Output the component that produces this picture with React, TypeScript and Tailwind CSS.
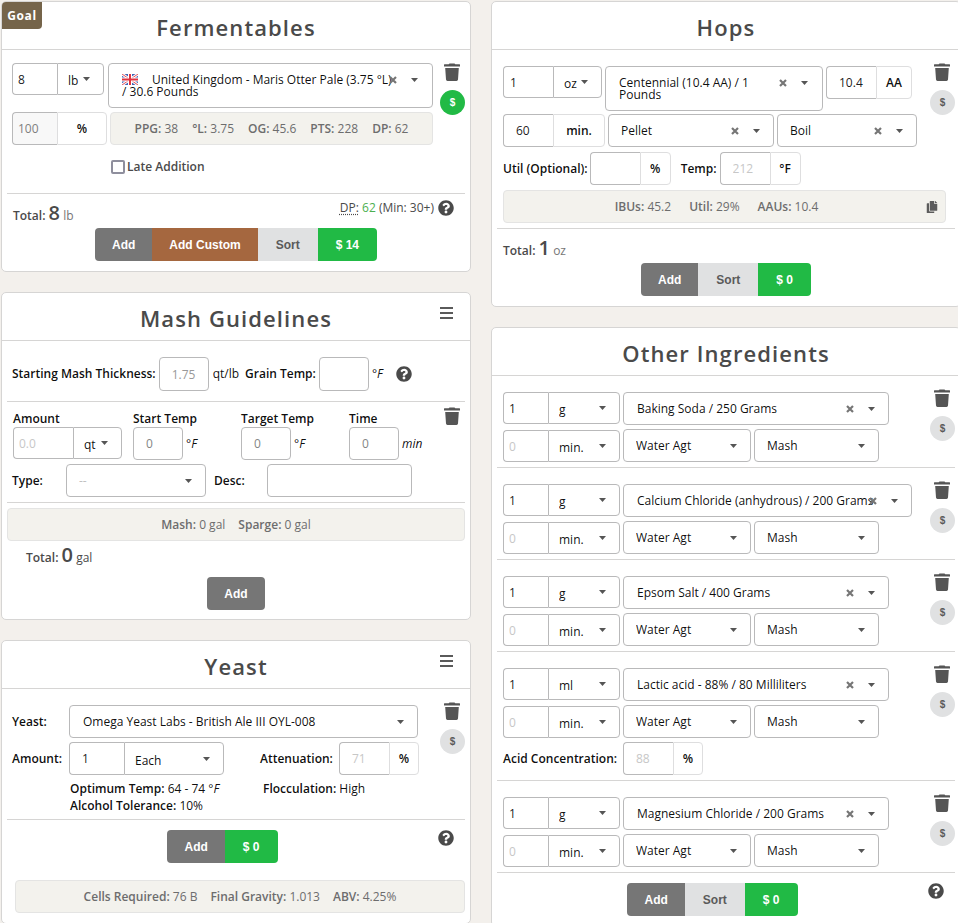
import type { ReactNode } from 'react';
import { clsx } from 'clsx';
import { FaCopy, FaQuestionCircle } from 'react-icons/fa';

type FieldProps = {
  label: string;
  value?: string;
  placeholder?: string;
  disabled?: boolean;
  id?: string;
  className?: string;
};

function Field({ label, value, placeholder, disabled, id, className }: FieldProps) {
  return (
    <input
      id={id}
      type="text"
      aria-label={label}
      defaultValue={value}
      placeholder={placeholder}
      disabled={disabled}
      className={clsx(
        'h-full min-w-0 shrink-0 border border-[#b9b9ba] bg-white text-black/90 disabled:bg-[#f8f8f8] disabled:text-[#7f7f7f]',
        className,
      )}
    />
  );
}

function Caret() {
  return (
    <svg viewBox="0 0 7 4" className="pointer-events-none absolute right-[14px] top-1/2 h-1 w-[7px] -translate-y-1/2 fill-[#555]">
      <path d="M0 0h7L3.5 4z" />
    </svg>
  );
}

function ClearButton() {
  return (
    <button type="button" aria-label="Clear" className="absolute right-[35px] top-1/2 -translate-y-1/2 text-[#767676]">
      <svg viewBox="0 0 8 8" className="size-2" fill="none" stroke="currentColor" strokeWidth="2.2">
        <path d="M1 1l6 6M7 1L1 7" />
      </svg>
    </button>
  );
}

function TrashIcon() {
  return (
    <svg viewBox="0 0 16 18" className="h-[18px] w-4" fill="currentColor">
      <path d="M5.5 0.4h5l.8.9h4.2a.5.5 0 0 1 .5.5v1.8H0V1.800a.5.5 0 0 1 .5-.5h4.200z" />
      <path d="M1.200 5h13.600l-.8 11.600A1.500 1.500 0 0 1 12.500 18h-9A1.500 1.500 0 0 1 2 16.600z" />
    </svg>
  );
}

type DropdownProps = {
  label: string;
  value: string;
  clearable?: boolean;
  className?: string;
  selectClassName?: string;
};

function Dropdown({ label, value, clearable, className, selectClassName = 'rounded pl-3' }: DropdownProps) {
  return (
    <div className={clsx('relative h-full shrink-0', className)}>
      <select
        aria-label={label}
        className={clsx('h-full w-full appearance-none border border-[#b9b9ba] bg-white', selectClassName)}
      >
        <option>{value}</option>
      </select>
      {clearable && <ClearButton />}
      <Caret />
    </div>
  );
}

// Dropdown whose value may take two lines. The select lies invisibly on top of the drawn value.
function WrappingDropdown({ label, value, children, className }: { label: string; value: string; children: ReactNode; className?: string }) {
  return (
    <div className={clsx('relative h-[45px] rounded border border-[#b9b9ba] bg-white pr-9 pt-[10px] leading-3', className)}>
      <div aria-hidden="true">{children}</div>
      <select aria-label={label} className="absolute inset-0 w-full appearance-none opacity-0">
        <option>{value}</option>
      </select>
      <div className="absolute inset-x-0 top-0 h-8">
        <ClearButton />
        <Caret />
      </div>
    </div>
  );
}

// Number + unit select, joined in one box
function AmountUnit({ field, unit, className, unitClassName }: { field: FieldProps; unit: string; className?: string; unitClassName: string }) {
  return (
    <div className={clsx('flex shrink-0', className ?? 'h-8')}>
      <Field {...field} className={clsx('rounded-l border-r-0 placeholder:text-[#c7c7c7]', field.className)} />
      <Dropdown label={`${field.label} unit`} value={unit} className={unitClassName} selectClassName="rounded-r pl-[10px] pt-1" />
    </div>
  );
}

function Addon({ field, unit, className, unitClassName }: { field: FieldProps; unit: string; className?: string; unitClassName: string }) {
  return (
    <div className={clsx('flex h-[33px] shrink-0', className)}>
      <Field {...field} className={clsx('rounded-l border-r-0 placeholder:text-[#c7c7c7]', field.className)} />
      <span className={clsx('flex items-center justify-center rounded-r border border-[#dededf] font-semibold', unitClassName)}>
        {unit}
      </span>
    </div>
  );
}

function Panel({ title, menu, badge, children }: { title: string; menu?: boolean; badge?: string; children: ReactNode }) {
  return (
    <section className="relative rounded-[5px] border border-[#d6d5d4] bg-white">
      <header className="flex h-12 items-center justify-center border-b border-[#d6d5d4] pt-1">
        <h2 className="text-[22px] font-semibold tracking-wider text-[#4a4a4a]">{title}</h2>
      </header>
      {badge && (
        <span className="absolute left-0 top-0 flex h-[27px] w-10 items-center justify-center rounded-br rounded-tl bg-[#75644a] font-bold tracking-wider text-white">
          {badge}
        </span>
      )}
      {menu && (
        <button type="button" aria-label={`${title} menu`} className="absolute right-[17px] top-[14px] flex w-[13px] flex-col gap-[3px]">
          <span className="h-[2px] w-full bg-[#5a5a5a]" />
          <span className="h-[2px] w-full bg-[#5a5a5a]" />
          <span className="h-[2px] w-full bg-[#5a5a5a]" />
        </button>
      )}
      <div className="mx-[5px]">{children}</div>
    </section>
  );
}

function RowActions({ priced }: { priced?: boolean }) {
  return (
    <div className="ml-auto flex w-[25px] shrink-0 flex-col items-center gap-[9px] pt-[13px]">
      <button type="button" aria-label="Delete" className="mr-[2px] text-[#555]">
        <TrashIcon />
      </button>
      <button
        type="button"
        aria-label="Price"
        className={clsx(
          'size-[25px] rounded-full font-["Liberation_Sans",sans-serif] text-[10px] font-bold',
          priced ? 'bg-[#21ba45] text-white' : 'bg-[#e0e1e2] text-[#5a5a5a]',
        )}
      >
        $
      </button>
    </div>
  );
}

const BUTTON_TONES = {
  gray: 'bg-[#767676] text-white',
  brown: 'bg-[#a5673f] text-white',
  light: 'bg-[#e0e1e2] text-[#5a5a5a]',
  green: 'bg-[#21ba45] text-white',
};

function ButtonGroup({ buttons }: { buttons: { text: string; tone: keyof typeof BUTTON_TONES }[] }) {
  return (
    <div className="flex flex-1 justify-center">
      {buttons.map((b) => (
        <button
          key={b.text}
          type="button"
          className={clsx(
            'h-[33px] font-["Liberation_Sans",sans-serif] font-bold first:rounded-l last:rounded-r',
            b.text.startsWith('Add') ? 'px-[17px]' : 'px-[18px]',
            BUTTON_TONES[b.tone],
          )}
        >
          {b.text}
        </button>
      ))}
    </div>
  );
}

function Stats({ items, className }: { items: [string, string][]; className?: string }) {
  return (
    <div className={clsx('flex h-[33px] items-center justify-center rounded border border-[#e4e4e3] bg-[#f3f2ed] text-[#6d6d6d]', className)}>
      {items.map(([name, value]) => (
        <span key={name}>
          <b className="font-semibold">{name}:</b> {value}
        </span>
      ))}
    </div>
  );
}

function Total({ value, unit, mutedUnit }: { value: string; unit: string; mutedUnit?: boolean }) {
  return (
    <div className="leading-6 text-[#4a4a4a]">
      <span className="font-semibold">Total:</span> <span className="text-xl font-semibold leading-6">{value}</span>{' '}
      <span className={mutedUnit ? 'text-[#767676]' : undefined}>{unit}</span>
    </div>
  );
}

function Help() {
  return (
    <button type="button" aria-label="Help" className="text-[#4a4a4a]">
      <FaQuestionCircle size={16} />
    </button>
  );
}

function UkFlag() {
  return (
    <svg viewBox="0 0 16 11" className="mr-[14px] inline-block h-[11px] w-4 align-[-1px]">
      <path fill="#3f62b5" d="M0 0h16v11H0z" />
      <path stroke="#fff" strokeWidth="2.8" d="M0 0l16 11M16 0L0 11" />
      <path stroke="#e0505a" strokeWidth="1" d="M0 0l16 11M16 0L0 11" />
      <path stroke="#fff" strokeWidth="4" d="M8 0v11M0 5.5h16" />
      <path stroke="#e03440" strokeWidth="2" d="M8 0v11M0 5.5h16" />
    </svg>
  );
}

function Fermentables() {
  return (
    <Panel title="Fermentables" badge="Goal">
      <div className="flex border-b border-[#d6d5d4] pl-[5px]">
        <div className="mr-[7px] flex min-w-0 flex-1 flex-col gap-1 pb-2 pt-[13px]">
          <div className="flex gap-1">
            <AmountUnit field={{ label: 'Fermentable amount', value: '8', className: 'w-[45px] pl-[5px]' }} unit="lb" unitClassName="w-[47px]" />
            <WrappingDropdown label="Fermentable" value="United Kingdom - Maris Otter Pale" className="flex-1 pl-[13px]">
              <UkFlag />
              United Kingdom - Maris Otter Pale (3.75 °L) / 30.6 Pounds
            </WrappingDropdown>
          </div>
          <div className="flex gap-[3px]">
            <Addon
              field={{ label: 'Percent of bill', value: '100', disabled: true, className: 'w-[45px] pl-[5px]' }}
              unit="%"
              unitClassName="w-[50px]"
            />
            <Stats
              className="flex-1 gap-[14px]"
              items={[['PPG', '38'], ['°L', '3.75'], ['OG', '45.6'], ['PTS', '228'], ['DP', '62']]}
            />
          </div>
          <label className="ml-[99px] flex h-9 items-center gap-[2px] font-semibold text-[#4a4a4a]">
            <input type="checkbox" className="size-[14px] appearance-none rounded-xs border-2 border-[#8f8f9d]" />
            Late Addition
          </label>
        </div>
        <RowActions priced />
      </div>
      <div className="flex h-[34px] items-start justify-between pl-[6px] pr-[11px] pt-[6px]">
        <div className="pt-px">
          <Total value="8" unit="lb" mutedUnit />
        </div>
        <div className="flex items-center gap-1 text-[#4a4a4a]">
          <span>
            <abbr title="Diastatic Power" className="underline decoration-dotted underline-offset-2">DP:</abbr>{' '}
            <span className="text-[#4caf50]">62</span> (Min: 30+)
          </span>
          <Help />
        </div>
      </div>
      <div className="flex pb-[10px]">
        <ButtonGroup
          buttons={[
            { text: 'Add', tone: 'gray' },
            { text: 'Add Custom', tone: 'brown' },
            { text: 'Sort', tone: 'light' },
            { text: '$ 14', tone: 'green' },
          ]}
        />
      </div>
    </Panel>
  );
}

function Mash() {
  return (
    <Panel title="Mash Guidelines" menu>
      <div className="flex items-center border-b border-[#d6d5d4] pb-[10px] pl-[5px] pt-4">
        <label htmlFor="thickness" className="font-semibold">Starting Mash Thickness:</label>
        <div className="ml-[3px] h-[34px]">
          <Field id="thickness" label="Starting Mash Thickness" placeholder="1.75" className="w-[50px] rounded pl-3 placeholder:text-[#999]" />
        </div>
        <span className="ml-1">qt/lb</span>
        <label htmlFor="grain-temp" className="ml-[6px] font-semibold">Grain Temp:</label>
        <div className="ml-[3px] h-[34px]">
          <Field id="grain-temp" label="Grain Temp" className="w-[50px] rounded pl-3" />
        </div>
        <i className="ml-[3px] mr-[13px]">°F</i>
        <Help />
      </div>
      <div className="relative flex flex-col gap-1 border-b border-[#d6d5d4] pb-[5px] pt-2">
        <div className="grid grid-cols-[120px_108px_108px_1fr] pl-[6px]">
          <div>
            <div className="h-[17px] font-semibold leading-[18px]">Amount</div>
            <AmountUnit
              field={{ label: 'Amount', placeholder: '0.0', className: 'w-[60px] pl-[5px]' }}
              unit="qt"
              unitClassName="w-[49px]"
            />
          </div>
          {[
            ['Start Temp', '°F'],
            ['Target Temp', '°F'],
            ['Time', 'min'],
          ].map(([name, unit]) => (
            <div key={name}>
              <div className="h-[17px] font-semibold leading-[18px]">{name}</div>
              <div className="flex h-[33px] items-center gap-[3px]">
                <Field label={name} placeholder="0" className="w-[50px] rounded pl-3 placeholder:text-[#858585]" />
                <i>{unit}</i>
              </div>
            </div>
          ))}
        </div>
        <div className="flex h-[33px] items-center pl-[5px]">
          <span className="w-[54px] font-semibold">Type:</span>
          <Dropdown label="Type" value="--" className="w-[140px]" selectClassName="rounded pl-3 text-[#c0c0c0]" />
          <label htmlFor="mash-desc" className="ml-2 w-[53px] font-semibold">Desc:</label>
          <Field id="mash-desc" label="Description" className="w-[145px] rounded pl-3" />
        </div>
        <button type="button" aria-label="Delete" className="absolute right-[5px] top-[5px] text-[#555]">
          <TrashIcon />
        </button>
      </div>
      <Stats className="mt-[5px] gap-[13px]" items={[['Mash', '0 gal'], ['Sparge', '0 gal']]} />
      <div className="h-9 pl-[19px] pt-[2px]">
        <Total value="0" unit="gal" />
      </div>
      <div className="flex pb-[9px]">
        <ButtonGroup buttons={[{ text: 'Add', tone: 'gray' }]} />
      </div>
    </Panel>
  );
}

function Yeast() {
  return (
    <Panel title="Yeast" menu>
      <div className="flex border-b border-[#d6d5d4] pl-[5px]">
        <div className="flex flex-col gap-1 pb-[5px] pt-4">
          <div className="flex h-[33px] items-center">
            <span className="w-[57px] font-semibold">Yeast:</span>
            <Dropdown label="Yeast" value="Omega Yeast Labs - British Ale III OYL-008" className="w-[349px]" selectClassName="rounded pl-[13px]" />
          </div>
          <div className="flex h-[33px] items-center">
            <span className="w-[57px] font-semibold">Amount:</span>
            <AmountUnit
              className="h-[33px]"
              field={{ label: 'Yeast amount', value: '1', className: 'w-[55px] pl-3' }}
              unit="Each"
              unitClassName="w-[100px]"
            />
            <span className="ml-9 w-[79px] font-semibold">Attenuation:</span>
            <Addon field={{ label: 'Attenuation', placeholder: '71', className: 'w-[50px] pl-3' }} unit="%" unitClassName="w-[30px]" />
          </div>
          <div className="ml-[58px] grid grid-cols-[193px_1fr] pt-px leading-[17px]">
            <div>
              <b className="font-semibold">Optimum Temp:</b> 64 - 74 <i>°F</i>
            </div>
            <div>
              <b className="font-semibold">Flocculation:</b> High
            </div>
            <div>
              <b className="font-semibold">Alcohol Tolerance:</b> 10%
            </div>
          </div>
        </div>
        <RowActions />
      </div>
      <div className="flex items-start pr-[11px] pt-[10px]">
        <ButtonGroup buttons={[{ text: 'Add', tone: 'gray' }, { text: '$ 0', tone: 'green' }]} />
        <Help />
      </div>
      <Stats
        className="mb-[10px] ml-2 mt-[17px] gap-[13px]"
        items={[['Cells Required', '76 B'], ['Final Gravity', '1.013'], ['ABV', '4.25%']]}
      />
    </Panel>
  );
}

function Hops() {
  return (
    <Panel title="Hops">
      <div className="relative flex border-b border-[#d6d5d4] pb-[5px] pl-[6px]">
        <div className="flex min-w-0 flex-1 flex-col gap-[5px] pt-4">
          <div className="-mb-[2px] flex gap-[3px]">
            <AmountUnit field={{ label: 'Hop amount', value: '1', className: 'w-[50px] pl-[6px]' }} unit="oz" unitClassName="w-[49px]" />
            <WrappingDropdown label="Hop" value="Centennial" className="w-[218px] pl-[13px]">
              Centennial (10.4 AA) / 1 Pounds
            </WrappingDropdown>
            <Addon field={{ label: 'Alpha acid', value: '10.4', className: 'w-[50px] pl-3' }} unit="AA" unitClassName="w-9" />
          </div>
          <div className="flex h-[33px] gap-[3px]">
            <Addon field={{ label: 'Hop time', value: '60', className: 'w-[50px] pl-3' }} unit="min." unitClassName="w-[52px]" />
            <Dropdown label="Hop type" value="Pellet" clearable className="w-[166px]" />
            <Dropdown label="Hop use" value="Boil" clearable className="w-[140px]" />
          </div>
          <div className="flex h-[33px] items-center">
            <span className="font-semibold">Util (Optional):</span>
            <Addon className="ml-[2px]" field={{ label: 'Utilization', className: 'w-[50px] pl-3' }} unit="%" unitClassName="w-[31px]" />
            <span className="ml-[10px] font-semibold">Temp:</span>
            <Addon className="ml-[3px]" field={{ label: 'Hop temp', placeholder: '212', className: 'w-[50px] pl-3' }} unit="°F" unitClassName="w-[31px]" />
          </div>
          <div className="relative -mr-4">
            <Stats className="gap-[18px] pr-4" items={[['IBUs', '45.2'], ['Util', '29%'], ['AAUs', '10.4']]} />
            <button type="button" aria-label="Copy" className="absolute right-2 top-[11px] text-[#5c5c5c]">
              <FaCopy size={12} />
            </button>
          </div>
        </div>
        <RowActions />
      </div>
      <div className="h-[34px] pl-[6px] pt-[7px]">
        <Total value="1" unit="oz" mutedUnit />
      </div>
      <div className="flex pb-[10px]">
        <ButtonGroup buttons={[{ text: 'Add', tone: 'gray' }, { text: 'Sort', tone: 'light' }, { text: '$ 0', tone: 'green' }]} />
      </div>
    </Panel>
  );
}

const ingredients = [
  { name: 'Baking Soda / 250 Grams', unit: 'g' },
  { name: 'Calcium Chloride (anhydrous) / 200 Grams', unit: 'g', wide: true },
  { name: 'Epsom Salt / 400 Grams', unit: 'g' },
  { name: 'Lactic acid - 88% / 80 Milliliters', unit: 'ml', acid: '88' },
  { name: 'Magnesium Chloride / 200 Grams', unit: 'g' },
];

function OtherIngredients() {
  return (
    <Panel title="Other Ingredients">
      {ingredients.map((item) => (
        <div key={item.name} className="flex border-b border-[#d6d5d4] pl-[6px]">
          <div className="flex flex-col gap-1 pb-[5px] pt-4">
            <div className="flex h-[33px] gap-[3px]">
              <AmountUnit field={{ label: `${item.name} amount`, value: '1', className: 'w-[45px] pl-[5px]' }} unit={item.unit} unitClassName="w-[72px]" />
              <Dropdown
                label="Ingredient"
                value={item.name}
                clearable
                className={item.wide ? 'w-[289px]' : 'w-[266px]'}
                selectClassName="rounded pl-[13px]"
              />
            </div>
            <div className="flex h-[33px] items-end gap-[3px]">
              <AmountUnit field={{ label: `${item.name} time`, placeholder: '0', className: 'w-[45px] pl-[5px]' }} unit="min." unitClassName="w-[72px]" />
              <Dropdown label="Ingredient type" value="Water Agt" className="w-[128px]" />
              <Dropdown label="Ingredient use" value="Mash" className="w-[125px]" />
            </div>
            {item.acid && (
              <div className="flex h-[33px] items-center">
                <span className="w-[120px] font-semibold">Acid Concentration:</span>
                <Addon field={{ label: 'Acid concentration', placeholder: item.acid, className: 'w-[50px] pl-3' }} unit="%" unitClassName="w-[30px]" />
              </div>
            )}
          </div>
          <RowActions />
        </div>
      ))}
      <div className="flex items-start pb-[10px] pr-[11px] pt-[10px]">
        <ButtonGroup buttons={[{ text: 'Add', tone: 'gray' }, { text: 'Sort', tone: 'light' }, { text: '$ 0', tone: 'green' }]} />
        <Help />
      </div>
    </Panel>
  );
}

export default function App() {
  return (
    <div className='h-screen overflow-hidden bg-[#f3f0ec] font-["Open_Sans",sans-serif] text-xs text-black/95'>
      <main className="-mr-[3px] grid grid-cols-2 items-start gap-5 pl-px pt-px">
        <div className="flex min-w-0 flex-col gap-5">
          <Fermentables />
          <Mash />
          <Yeast />
        </div>
        <div className="flex min-w-0 flex-col gap-5">
          <Hops />
          <OtherIngredients />
        </div>
      </main>
    </div>
  );
}
